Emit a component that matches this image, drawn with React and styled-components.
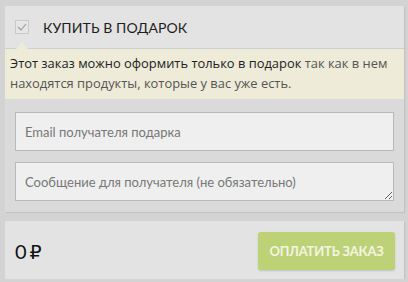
import React from "react";
import styled, { createGlobalStyle } from "styled-components";

const GlobalStyle = createGlobalStyle`
  html, body {
    margin: 0;
    padding: 0;
    background: #d3d3d3;
    font-family: Lato, "Open Sans", sans-serif;
  }
  * { box-sizing: border-box; }
`;

const Page = styled.div`
  padding: 6px 4px 0 5px;
  display: flex;
  flex-direction: column;
  gap: 9px;
`;

const Panel = styled.section`
  background: #dadada;
  box-shadow: 1px 1px 1px rgba(0, 0, 0, 0.08);
`;

const Header = styled.label`
  display: flex;
  align-items: center;
  gap: 14px;
  height: 43px;
  padding: 0 10px;
  background: #e3e3e3;
  border-bottom: 1px solid #cfcfcf;
  font-size: 14px;
  color: #1e1e1e;
  letter-spacing: 0.1px;
`;

const Check = styled.span`
  width: 14px;
  height: 14px;
  border: 1px solid #c9c9c9;
  background: #e6e6e6;
  display: flex;
  align-items: center;
  justify-content: center;
  margin-top: -1px;
`;

const Notice = styled.div`
  position: relative;
  background: #eeebd8;
  padding: 4px 9px 6px 5px;
  font-family: "Open Sans", sans-serif;
  font-size: 12.9px;
  line-height: 20px;
  color: #555;

  &::before {
    content: "";
    position: absolute;
    left: 11px;
    top: -7px;
    border-left: 6px solid transparent;
    border-right: 6px solid transparent;
    border-bottom: 7px solid #eeebd8;
  }

  strong {
    font-weight: 400;
    color: #222;
  }
`;

const Fields = styled.div`
  padding: 13px 10px 11px 10px;
  display: flex;
  flex-direction: column;
  gap: 11px;
`;

const Input = styled.input`
  height: 39px;
  width: 100%;
  border: 1px solid #b9b9b9;
  background: #efefef;
  padding: 0 9px;
  font-family: Lato, sans-serif;
  font-size: 13px;
  outline: none;
  &::placeholder { color: #777; }
`;

const Area = styled.textarea`
  height: 39px;
  width: 100%;
  border: 1px solid #b9b9b9;
  background: #efefef;
  padding: 11px 9px 0;
  font-family: Lato, sans-serif;
  font-size: 13px;
  display: block;
  outline: none;
  &::placeholder { color: #777; }
`;

const Footer = styled.section`
  background: #e3e3e3;
  height: 58px;
  display: flex;
  align-items: center;
  justify-content: space-between;
  padding: 0 9px 0 10px;
  box-shadow: 1px 1px 1px rgba(0, 0, 0, 0.08);
`;

const Total = styled.div`
  display: flex;
  align-items: baseline;
  gap: 3px;
  font-family: Lato, "DejaVu Sans", sans-serif;
  font-size: 20px;
  color: #111;
  margin-top: 2px;
`;

const Ruble = styled.span`
  font-family: "DejaVu Sans", sans-serif;
  font-size: 19px;
`;

const PayButton = styled.button`
  width: 137px;
  height: 38px;
  border: none;
  border-radius: 3px;
  background: #bdd176;
  color: #f1f5e2;
  font-family: Lato, sans-serif;
  font-weight: 700;
  font-size: 13px;
  letter-spacing: -0.2px;
  box-shadow: 0 1px 2px rgba(0, 0, 0, 0.15);
  margin-top: 1px;
`;

export default function App() {
  return (
    <>
      <GlobalStyle />
      <Page>
        <Panel>
          <Header>
            <Check>
              <svg width="10" height="8" viewBox="0 0 10 8">
                <path d="M1 4l3 3 5-6" fill="none" stroke="#9a9a9a" strokeWidth="1.1" />
              </svg>
            </Check>
            КУПИТЬ В ПОДАРОК
          </Header>
          <Notice>
            <strong>Этот заказ можно оформить только в подарок</strong> так как в нем
            находятся продукты, которые у вас уже есть.
          </Notice>
          <Fields>
            <Input placeholder="Email получателя подарка" />
            <Area placeholder="Сообщение для получателя (не обязательно)" />
          </Fields>
        </Panel>
        <Footer>
          <Total>
            0<Ruble>₽</Ruble>
          </Total>
          <PayButton>ОПЛАТИТЬ ЗАКАЗ</PayButton>
        </Footer>
      </Page>
    </>
  );
}
